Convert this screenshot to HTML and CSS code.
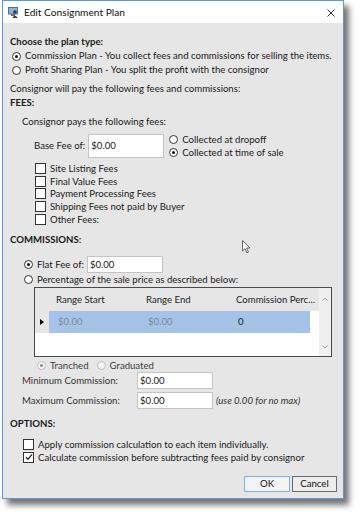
FILE: index.html
```html
<!DOCTYPE html>
<html>
<head>
<meta charset="utf-8">
<link rel="stylesheet" href="styles.css">
</head>
<body>
<div class="window">
  <div class="titlebar">
    <svg class="appicon" width="11" height="11" viewBox="0 0 11 11">
      <rect x="0.5" y="0.5" width="9" height="6.5" fill="#8fb3d6" stroke="#4f6f8f" stroke-width="1"/>
      <rect x="3" y="7" width="4" height="2" fill="#5b6b7b"/>
      <circle cx="7" cy="5" r="1.8" fill="#2e3a46"/>
      <path d="M4.5 11 Q7 6.5 9.5 11 Z" fill="#2e3a46"/>
    </svg>
    <span class="title">Edit Consignment Plan</span>
    <svg class="close" width="8" height="8" viewBox="0 0 8 8">
      <path d="M0.5 0.5 L7.5 7.5 M7.5 0.5 L0.5 7.5" stroke="#222" stroke-width="0.9"/>
    </svg>
  </div>
  <div class="content">
    <div class="heading first">Choose the plan type:</div>
    <div class="row plan"><span class="radio checked"></span><span>Commission Plan - You collect fees and commissions for selling the items.</span></div>
    <div class="row plan"><span class="radio"></span><span>Profit Sharing Plan - You split the profit with the consignor</span></div>
    <div class="row para">Consignor will pay the following fees and commissions:</div>
    <div class="heading">FEES:</div>
    <div class="row pays">Consignor pays the following fees:</div>
    <div class="basefee">
      <span class="lbl">Base Fee of:</span>
      <span class="textbox tall">$0.00</span>
      <div class="collect">
        <div class="crow"><span class="radio"></span><span>Collected at dropoff</span></div>
        <div class="crow"><span class="radio checked"></span><span>Collected at time of sale</span></div>
      </div>
    </div>
    <div class="checks">
      <div class="crow chk"><span class="checkbox"></span><span>Site Listing Fees</span></div>
      <div class="crow chk"><span class="checkbox"></span><span>Final Value Fees</span></div>
      <div class="crow chk"><span class="checkbox"></span><span>Payment Processing Fees</span></div>
      <div class="crow chk"><span class="checkbox"></span><span>Shipping Fees not paid by Buyer</span></div>
      <div class="crow chk"><span class="checkbox"></span><span>Other Fees:</span></div>
    </div>
    <div class="heading comm">COMMISSIONS:</div>
    <div class="flat">
      <span class="radio checked"></span><span class="flatlbl">Flat Fee of:</span>
      <span class="textbox">$0.00</span>
    </div>
    <div class="row pct"><span class="radio"></span><span>Percentage of the sale price as described below:</span></div>
    <div class="grid">
      <div class="gmain">
        <div class="ghead">
          <span class="rh"></span>
          <span class="gc">Range Start</span>
          <span class="gc">Range End</span>
          <span class="gc last">Commission Perc...</span>
        </div>
        <div class="grow">
          <span class="rh"><svg width="4" height="6" viewBox="0 0 4 6"><path d="M0 0 L4 3 L0 6 Z" fill="#000"/></svg></span>
          <span class="gc sel dim">$0.00</span>
          <span class="gc sel dim">$0.00</span>
          <span class="gc sel last">0</span>
        </div>
      </div>
      <div class="vscroll">
        <svg width="6" height="4" viewBox="0 0 6 4"><path d="M0.5 3.5 L3 1 L5.5 3.5" stroke="#a0a0a0" fill="none" stroke-width="1"/></svg>
        <svg width="6" height="4" viewBox="0 0 6 4"><path d="M0.5 0.5 L3 3 L5.5 0.5" stroke="#a0a0a0" fill="none" stroke-width="1"/></svg>
      </div>
    </div>
    <div class="tranche">
      <span class="radio dis checked"></span><span class="distext">Tranched</span>
      <span class="radio dis grad"></span><span class="distext">Graduated</span>
    </div>
    <div class="limit">
      <span class="limlbl">Minimum Commission:</span>
      <span class="textbox">$0.00</span>
    </div>
    <div class="limit max">
      <span class="limlbl">Maximum Commission:</span>
      <span class="textbox">$0.00</span>
      <span class="hint">(use 0.00 for no max)</span>
    </div>
    <div class="heading opts">OPTIONS:</div>
    <div class="options">
      <div class="crow chk"><span class="checkbox"></span><span>Apply commission calculation to each item individually.</span></div>
      <div class="crow chk"><span class="checkbox checked"><svg width="8" height="8" viewBox="0 0 8 8"><path d="M1 4.2 L3 6.3 L7 1.3" stroke="#222" stroke-width="1.3" fill="none"/></svg></span><span>Calculate commission before subtracting fees paid by consignor</span></div>
    </div>
    <div class="buttons">
      <span class="btn ok">OK</span>
      <span class="btn cancel">Cancel</span>
    </div>
  </div>
</div>
<svg class="cursor" width="9" height="14" viewBox="0 0 9 14">
  <path d="M0.5 0.5 L0.5 11 L3 8.6 L4.8 12.8 L6.4 12.1 L4.6 8 L8 8 Z" fill="#fff" stroke="#555" stroke-width="0.9"/>
</svg>
</body>
</html>
```

FILE: styles.css
```css
html, body {
  margin: 0;
  padding: 0;
  background: #ffffff;
}
body {
  width: 364px;
  height: 521px;
  overflow: hidden;
  position: relative;
  font-family: Lato, "Noto Sans", sans-serif;
  font-size: 9.6px;
  color: #1a1a1a;
}
.window {
  margin-left: 2px;
  width: 340px;
  height: 497px;
  border: 1px solid #5a9ad6;
  background: #e6e6e6;
  box-shadow: 5px 6px 6px rgba(0, 0, 0, 0.55);
  display: flex;
  flex-direction: column;
}
.titlebar {
  height: 22px;
  background: #ffffff;
  display: flex;
  align-items: center;
  padding-left: 5px;
  padding-right: 8px;
  flex-shrink: 0;
}
.appicon { margin-right: 5px; }
.title {
  font-size: 10.2px;
  color: #111;
  flex: 1;
}
.close { margin-top: 1px; }
.content {
  flex: 1;
  display: flex;
  flex-direction: column;
  padding: 0 6px 0 7px;
}
.heading {
  font-weight: bold;
  height: 14px;
  line-height: 14px;
  white-space: nowrap;
}
.heading.first { margin-top: 12px; }
.row {
  height: 14px;
  line-height: 14px;
  display: flex;
  align-items: center;
  white-space: nowrap;
}
.plan { padding-left: 2px; }
.para { margin-top: 5px; }
.pays { margin-top: 5px; padding-left: 12px; }
.radio {
  width: 7px;
  height: 7px;
  border: 1px solid #333;
  border-radius: 50%;
  background: #fff;
  margin-right: 4px;
  flex-shrink: 0;
  position: relative;
  box-sizing: content-box;
}
.radio.checked::after {
  content: "";
  position: absolute;
  left: 2px;
  top: 2px;
  width: 3px;
  height: 3px;
  border-radius: 50%;
  background: #111;
}
.radio.dis { border-color: #bdbdbd; background: #f4f4f4; }
.radio.dis.checked::after { background: #8a8a8a; }
.checkbox {
  width: 9px;
  height: 9px;
  border: 1px solid #333;
  background: #fff;
  margin-right: 4px;
  flex-shrink: 0;
  display: flex;
  align-items: center;
  justify-content: center;
}
.basefee {
  margin-top: 4px;
  height: 25px;
  display: flex;
  align-items: center;
  padding-left: 24px;
}
.lbl { margin-right: 3px; }
.textbox {
  width: 72px;
  height: 15px;
  line-height: 15px;
  background: #fff;
  border: 1px solid #c4c4c4;
  padding-left: 2px;
  box-sizing: content-box;
  flex-shrink: 0;
}
.textbox.tall {
  height: 22px;
  line-height: 22px;
}
.collect {
  margin-left: 5px;
  display: flex;
  flex-direction: column;
}
.crow {
  display: flex;
  align-items: center;
  height: 13px;
  white-space: nowrap;
}
.checks {
  margin-top: 4px;
  padding-left: 25px;
  display: flex;
  flex-direction: column;
}
.checks .chk { height: 12.75px; }
.heading.comm { margin-top: 7px; }
.flat {
  margin-top: 9px;
  height: 17px;
  display: flex;
  align-items: center;
  padding-left: 14px;
}
.flatlbl { margin-right: 3px; }
.pct { padding-left: 14px; }
.grid {
  margin-left: 24px;
  width: 296px;
  height: 68px;
  border: 1px solid #4a4a4a;
  background: #ffffff;
  display: flex;
}
.gmain {
  flex: 1;
  display: flex;
  flex-direction: column;
}
.ghead {
  height: 23px;
  background: #e6e6e6;
  display: flex;
  align-items: center;
}
.rh {
  width: 14px;
  height: 100%;
  display: flex;
  align-items: center;
  justify-content: center;
  flex-shrink: 0;
  background: #e6e6e6;
}
.gc {
  width: 90px;
  padding-left: 7px;
  box-sizing: border-box;
  white-space: nowrap;
  color: #222;
}
.gc.last { width: 81px; }
.grow {
  height: 22px;
  display: flex;
  align-items: stretch;
}
.grow .gc {
  display: flex;
  align-items: center;
  padding-left: 9px;
  background: #a4c3e6;
  color: #222;
}
.grow .gc.dim { color: #7e8a99; }
.vscroll {
  width: 12px;
  background: #f0f0f0;
  display: flex;
  flex-direction: column;
  justify-content: space-between;
  align-items: center;
  padding: 9px 0 7px;
}
.tranche {
  margin-top: 2px;
  height: 13px;
  display: flex;
  align-items: center;
  padding-left: 27px;
}
.distext { color: #404040; margin-right: 8px; }
.limit {
  height: 17px;
  display: flex;
  align-items: center;
  padding-left: 12px;
}
.limit.max { margin-top: 3px; }
.limlbl { width: 115px; color: #333; }
.hint { margin-left: 3px; font-style: italic; color: #333; }
.heading.opts { margin-top: 8px; }
.options {
  margin-top: 7px;
  padding-left: 13px;
  display: flex;
  flex-direction: column;
}
.buttons {
  margin-top: auto;
  margin-bottom: 6px;
  display: flex;
  justify-content: flex-end;
  gap: 2px;
}
.btn {
  height: 14px;
  line-height: 14px;
  text-align: center;
  color: #111;
}
.ok {
  width: 44px;
  border: 1px solid #7ab2ea;
  background: #f3f3f3;
}
.cancel {
  width: 43px;
  border: 1px solid #6a6a6a;
  background: #ececec;
}
.cursor {
  position: absolute;
  left: 242px;
  top: 240px;
}
```
